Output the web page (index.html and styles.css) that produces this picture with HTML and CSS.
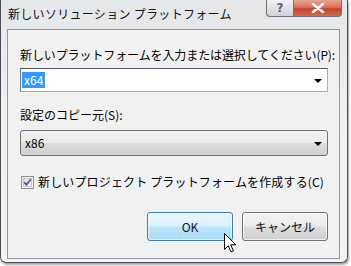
FILE: index.html
```html
<!DOCTYPE html>
<html lang="ja">
<head>
<meta charset="utf-8">
<title>新しいソリューション プラットフォーム</title>
<link rel="stylesheet" href="styles.css">
</head>
<body>
<div class="window">
  <div class="titlebar">
    <span class="title">新しいソリューション プラットフォーム</span>
    <div class="caption-buttons">
      <div class="cbtn help">?</div>
      <div class="cbtn close">
        <svg width="14" height="10" viewBox="0 0 14 10"><path d="M2 1 L12 9 M12 1 L2 9" stroke="#fff" stroke-width="2.6" stroke-linecap="round"/></svg>
      </div>
    </div>
  </div>
  <div class="client">
    <div class="label first">新しいプラットフォームを入力または選択してください(P):</div>
    <div class="combo edit">
      <span class="sel">x64</span>
      <span class="arrow"></span>
    </div>
    <div class="label second">設定のコピー元(S):</div>
    <div class="combo list">
      <span class="val">x86</span>
      <span class="arrow"></span>
    </div>
    <div class="check-row">
      <svg class="checkbox" width="13" height="13" viewBox="0 0 13 13">
        <defs>
          <linearGradient id="cbg" x1="0" y1="0" x2="1" y2="1">
            <stop offset="0" stop-color="#dcdcdc"/>
            <stop offset="1" stop-color="#ffffff"/>
          </linearGradient>
        </defs>
        <rect x="0.5" y="0.5" width="12" height="12" fill="#f4f4f4" stroke="#8f8f8f"/>
        <rect x="2.5" y="2.5" width="8" height="8" fill="url(#cbg)" stroke="#c4c4c4"/>
        <path d="M3.2 6.2 L5.4 8.8 L9.8 3.2" fill="none" stroke="#4a5f97" stroke-width="1.8"/>
      </svg>
      <span class="check-label">新しいプロジェクト プラットフォームを作成する(C)</span>
    </div>
    <div class="buttons">
      <div class="btn ok">OK</div>
      <div class="btn cancel">キャンセル</div>
    </div>
  </div>
  <svg class="cursor" width="13" height="20" viewBox="0 0 13 20"><path d="M0.5 0.5 L0.5 16.5 L4.3 12.8 L7 18.9 L9.4 17.9 L6.8 11.8 L11.8 11.8 Z" fill="#fff" stroke="#000" stroke-width="1" stroke-linejoin="miter"/></svg>
</div>
</body>
</html>
```

FILE: styles.css
```css
html, body {
  margin: 0;
  padding: 0;
  background: #ffffff;
}
body {
  width: 351px;
  height: 266px;
  overflow: hidden;
  font-family: "Noto Sans CJK JP", "Noto Sans", sans-serif;
  font-size: 12px;
  color: #000;
}
.window {
  position: relative;
  width: 348px;
  height: 263px;
  box-sizing: border-box;
  border: 1px solid #4a4e54;
  border-top: none;
  border-radius: 0 0 6px 6px;
  background: linear-gradient(180deg, #e4e7ea 0%, #eef0f2 40%, #f3f4f5 100%);
  box-shadow: 1px 2px 2px rgba(0,0,0,0.35);
  display: flex;
  flex-direction: column;
}
.titlebar {
  height: 29px;
  display: flex;
  align-items: flex-start;
  justify-content: space-between;
}
.title {
  margin: 5px 0 0 7px;
  line-height: 17px;
  color: #111;
  letter-spacing: 0.3px;
}
.caption-buttons {
  display: flex;
  margin-right: 5px;
}
.cbtn {
  height: 17px;
  box-sizing: border-box;
  display: flex;
  align-items: center;
  justify-content: center;
  border: 1px solid #6d7480;
  border-top: none;
}
.help {
  width: 27px;
  border-radius: 0 0 0 4px;
  border-right: none;
  background: linear-gradient(180deg, #f0f1f3 0%, #dfe2e6 50%, #cfd3d8 100%);
  color: #5b6370;
  font-family: "DejaVu Sans", sans-serif;
  font-weight: bold;
  font-size: 12px;
  line-height: 15px;
}
.close {
  width: 49px;
  border-radius: 0 0 4px 0;
  background: linear-gradient(180deg, #e8a493 0%, #d7725e 45%, #c5432b 55%, #d46a4e 100%);
}
.client {
  margin: 0 7px 0 6px;
  height: 230px;
  box-sizing: border-box;
  border: 1px solid #8d97a3;
  background: #f1f1f2;
  padding: 0 12px 0 12px;
  display: flex;
  flex-direction: column;
}
.label {
  line-height: 16px;
  white-space: nowrap;
}
.label.first {
  margin-top: 17px;
  letter-spacing: -0.1px;
}
.combo {
  position: relative;
  height: 24px;
  box-sizing: border-box;
  width: 308px;
  display: flex;
  align-items: center;
}
.combo.edit {
  margin-top: 5px;
  background: #ffffff;
  border: 1px solid #a5acb5;
  border-top-color: #4e5968;
  border-left-color: #6f7a88;
}
.sel {
  margin-left: 1px;
  background: #3399ff;
  color: #fff;
  padding: 0 2px;
  line-height: 16px;
}
.arrow {
  position: absolute;
  right: 5px;
  top: 10px;
  width: 0;
  height: 0;
  border-left: 4px solid transparent;
  border-right: 4px solid transparent;
  border-top: 4px solid #000;
}
.label.second {
  margin-top: 15px;
}
.combo.list {
  margin-top: 7px;
  height: 26px;
  border: 1px solid #707070;
  border-radius: 3px;
  background: linear-gradient(180deg, #f2f2f2 0%, #ebebeb 48%, #dddddd 52%, #cfcfcf 100%);
}
.val {
  margin-left: 4px;
  line-height: 16px;
}
.combo.list .arrow {
  top: 11px;
}
.check-row {
  margin-top: 18px;
  display: flex;
  align-items: center;
  gap: 4px;
  padding-left: 1px;
}
.checkbox {
  flex: none;
}
.check-label {
  line-height: 16px;
  white-space: nowrap;
  letter-spacing: 0.15px;
}
.buttons {
  margin-top: 22px;
  display: flex;
  justify-content: flex-end;
  gap: 9px;
  width: 308px;
}
.btn {
  width: 86px;
  height: 29px;
  box-sizing: border-box;
  border-radius: 3px;
  display: flex;
  align-items: center;
  justify-content: center;
  color: #111;
}
.btn.ok {
  border: 1px solid #3c7fb1;
  background: linear-gradient(180deg, #eaf6fd 0%, #d9f0fc 48%, #bee6fd 52%, #a7d9f5 100%);
  box-shadow: inset 0 0 0 1px rgba(255,255,255,0.6);
}
.btn.cancel {
  border: 1px solid #707070;
  background: linear-gradient(180deg, #f2f2f2 0%, #ebebeb 48%, #dddddd 52%, #cfcfcf 100%);
  box-shadow: inset 0 0 0 1px rgba(255,255,255,0.7);
}
.cursor {
  position: absolute;
  left: 223px;
  top: 233px;
}
```
